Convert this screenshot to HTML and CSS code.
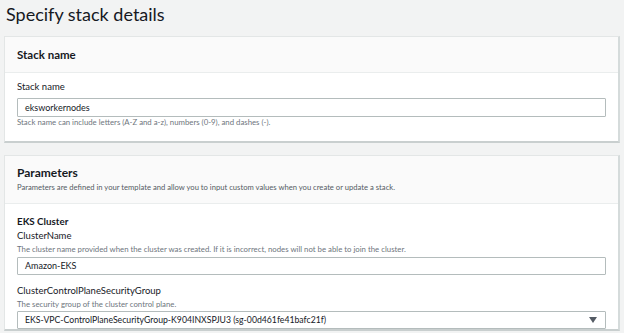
FILE: index.html
```html
<!DOCTYPE html>
<html>
<head>
<meta charset="utf-8">
<link rel="stylesheet" href="styles.css">
</head>
<body>
<h1 class="title">Specify stack details</h1>
<section class="card card-stack">
  <div class="card-header"><h2>Stack name</h2></div>
  <div class="card-body">
    <label class="label">Stack name</label>
    <div class="input">eksworkernodes</div>
    <div class="hint">Stack name can include letters (A-Z and a-z), numbers (0-9), and dashes (-).</div>
  </div>
</section>
<section class="card card-params">
  <div class="card-header params-header">
    <h2>Parameters</h2>
    <div class="desc">Parameters are defined in your template and allow you to input custom values when you create or update a stack.</div>
  </div>
  <div class="card-body params-body">
    <h3>EKS Cluster</h3>
    <div class="field">
      <label class="label">ClusterName</label>
      <div class="hint">The cluster name provided when the cluster was created. If it is incorrect, nodes will not be able to join the cluster.</div>
      <div class="input">Amazon-EKS</div>
    </div>
    <div class="field">
      <label class="label">ClusterControlPlaneSecurityGroup</label>
      <div class="hint">The security group of the cluster control plane.</div>
      <div class="input select"><span>EKS-VPC-ControlPlaneSecurityGroup-K904INXSPJU3 (sg-00d461fe41bafc21f)</span><span class="caret"></span></div>
    </div>
  </div>
</section>
</body>
</html>
```
FILE: styles.css
```css
html, body {
  margin: 0;
  padding: 0;
  background: #f2f3f3;
  font-family: Lato, "Open Sans", "Liberation Sans", sans-serif;
  color: #16191f;
  overflow: hidden;
  height: 333px;
}
body {
  padding: 0 4px;
}
.title {
  margin: 0;
  padding: 3px 0 0 2px;
  height: 36px;
  box-sizing: border-box;
  font-size: 18px;
  font-weight: 400;
  line-height: 23px;
}
.card {
  background: #fff;
  border: 1px solid #e3e6e6;
  border-right: 2px solid #d5dbdb;
  border-bottom: 2px solid #c9cfcf;
  margin-bottom: 12px;
}
.card-header {
  background: #fafafa;
  border-bottom: 1px solid #eaeded;
  padding: 0 12px;
  height: 35px;
  display: flex;
  flex-direction: column;
  justify-content: center;
}
.card-header h2 {
  margin: 0;
  font-size: 11.5px;
  font-weight: 700;
  line-height: 14px;
}
.card-body {
  padding: 7px 12px 0 12px;
  height: 68px;
  box-sizing: border-box;
}
.label {
  display: block;
  font-size: 9.5px;
  line-height: 14px;
}
.input {
  margin-top: 4px;
  height: 19px;
  box-sizing: border-box;
  border: 1px solid #b4bcbc;
  border-radius: 1px;
  padding: 0 7px;
  font-size: 9px;
  line-height: 17px;
  background: #fff;
}
.hint {
  font-size: 7.8px;
  line-height: 10px;
  color: #6e757d;
  margin-top: 0;
}
.params-header {
  height: 48px;
  justify-content: flex-start;
  padding-top: 8px;
  box-sizing: border-box;
}
.params-header h2 {
  font-size: 12px;
  line-height: 17px;
}
.desc {
  font-size: 7.65px;
  line-height: 12px;
  color: #545b64;
}
.params-body {
  padding-top: 10px;
  height: auto;
}
.params-body h3 {
  margin: 0;
  font-size: 9.8px;
  font-weight: 700;
  line-height: 14px;
}
.field {
  margin-top: 1px;
}
.field + .field {
  margin-top: 9px;
}
.field .hint {
  margin-top: 1px;
}
.field .input {
  margin-top: 3px;
  height: 18px;
  line-height: 16px;
}
.field .select {
  margin-top: 2px;
  font-size: 8.7px;
}
.select {
  display: flex;
  justify-content: space-between;
  align-items: center;
}
.caret {
  width: 0;
  height: 0;
  border-left: 4px solid transparent;
  border-right: 4px solid transparent;
  border-top: 6px solid #545b64;
  margin-right: 1px;
}
```
